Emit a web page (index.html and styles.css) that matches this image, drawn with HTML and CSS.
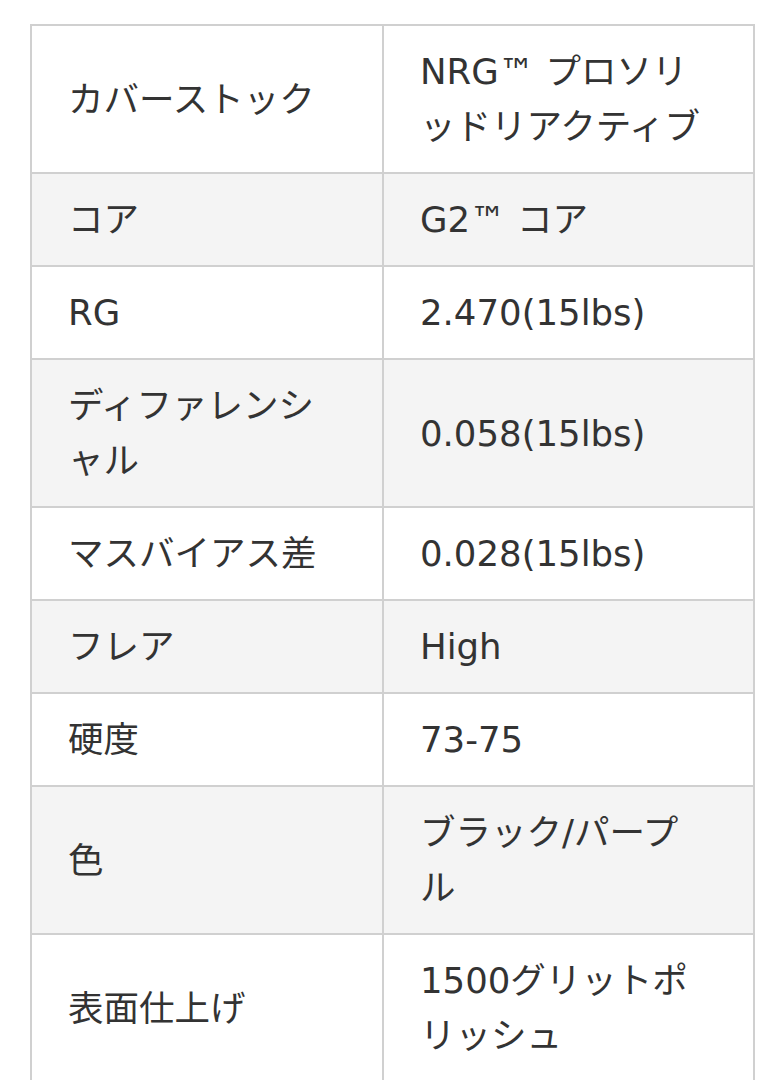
FILE: index.html
```html
<!DOCTYPE html>
<html lang="ja">
<head>
<meta charset="utf-8">
<title>Spec</title>
<link rel="stylesheet" href="styles.css">
</head>
<body>
<div class="page">
  <table class="spec">
    <colgroup><col class="c1"><col class="c2"></colgroup>
    <tbody>
      <tr><td>カバーストック</td><td>NRG™ プロソリッドリアクティブ</td></tr>
      <tr><td>コア</td><td>G2™ コア</td></tr>
      <tr><td>RG</td><td>2.470(15lbs)</td></tr>
      <tr><td>ディファレンシャル</td><td>0.058(15lbs)</td></tr>
      <tr><td>マスバイアス差</td><td>0.028(15lbs)</td></tr>
      <tr><td>フレア</td><td>High</td></tr>
      <tr><td>硬度</td><td>73-75</td></tr>
      <tr><td>色</td><td>ブラック/パープル</td></tr>
      <tr><td>表面仕上げ</td><td>1500グリットポリッシュ</td></tr>
    </tbody>
  </table>
</div>
</body>
</html>
```

FILE: styles.css
```css
html, body {
  margin: 0;
  padding: 0;
  background: #ffffff;
}
.page {
  padding: 24px 0 0 30px;
  font-family: "DejaVu Sans", "Noto Sans CJK JP", sans-serif;
  font-size: 35.5px;
  color: #333333;
}
.spec {
  border-collapse: collapse;
  table-layout: fixed;
  width: 723px;
}
.c1 { width: 352px; }
.c2 { width: 371px; }
.spec td {
  border: 2px solid #d0d0d0;
  padding: 18px 42px 18px 36px;
  line-height: 55px;
  vertical-align: middle;
  line-break: normal;
  word-break: normal;
}
.spec td:first-child {
  padding-right: 52px;
}
.spec tr:nth-child(even) td {
  background: #f4f4f4;
}
```
